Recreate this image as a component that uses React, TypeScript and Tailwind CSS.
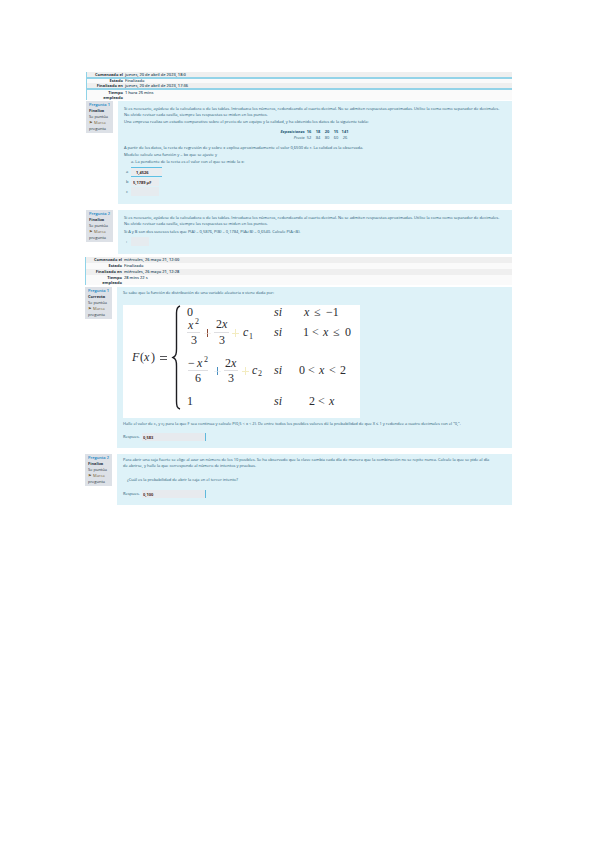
import type { ReactNode } from "react";

type SummaryRow = {
  label: ReactNode;
  value: string;
  className: string;
};

const elapsed = (
  <>
    Tiempo
    <br />
    empleado
  </>
);

const firstAttempt: SummaryRow[] = [
  { label: "Comenzado el", value: "jueves, 20 de abril de 2023, 18:0", className: "bg-[#efefef] leading-[5px] *:border-b-2" },
  { label: "Estado", value: "Finalizado", className: "bg-[#fafafa] leading-[4px]" },
  { label: "Finalizado en", value: "jueves, 20 de abril de 2023, 17:36", className: "bg-[#efefef] leading-[5px] *:border-b-2" },
  { label: elapsed, value: "1 hora 25 mins", className: "bg-[#fafafa] leading-[5px]" },
];

const secondAttempt: SummaryRow[] = [
  { label: "Comenzado el", value: "miércoles, 26 mayo 21, 12:00", className: "bg-[#efefef] leading-[6px]" },
  { label: "Estado", value: "Finalizado", className: "bg-[#fafafa] leading-[6px]" },
  { label: "Finalizado en", value: "miércoles, 26 mayo 21, 12:28", className: "bg-[#efefef] leading-[6px]" },
  { label: elapsed, value: "28 mins 22 s", className: "bg-[#fafafa] leading-[5px]" },
];

function Summary({ rows }: { rows: SummaryRow[] }) {
  return (
    <table className="w-full border-separate border-spacing-0 border-l border-[#8fd3e8] text-[4px] text-[#26323d]">
      <tbody>
        {rows.map((row, i) => (
          <tr key={i} className={row.className}>
            <th className="w-[36px] border-[#93d3e8] p-0 text-right align-top font-bold">{row.label}</th>
            <td className="border-[#93d3e8] py-0 pr-0 pl-[2px] align-top font-semibold text-[#2a4a60]">{row.value}</td>
          </tr>
        ))}
      </tbody>
    </table>
  );
}

function Question({ number, status, children }: { number: number; status: string; children: ReactNode }) {
  return (
    <section className="flex items-start gap-[5px]">
      <aside className="w-[27px] shrink-0 bg-[#dde1e7] px-[3px] pt-px pb-px text-[4px] leading-[6px] text-[#26323d]">
        <h2 className="font-semibold text-[#1583c4]">Pregunta {number}</h2>
        <p className="font-bold">{status}</p>
        <p>Se puntúa</p>
        <p className="text-[#7a643c]">⚑ Marca</p>
        <p className="font-medium">pregunta</p>
      </aside>
      <div className="min-w-0 grow bg-[#def2f8] px-[6px] text-[4px] leading-[6px] font-medium text-[#1f5875]">{children}</div>
    </section>
  );
}

function Answer({ id, value }: { id: string; value: string }) {
  return (
    <div className="flex h-[8px] items-center gap-[2px]">
      <label htmlFor={id} className="w-[17px]">
        Respues.
      </label>
      <input
        id={id}
        defaultValue={value}
        className="h-[8px] w-[64px] border-r border-[#5fb9dc] bg-[#e7eaee] px-[1px] font-bold text-[#4a2a24]"
      />
    </div>
  );
}

function Formula() {
  return (
    <svg
      viewBox="0 0 237 113"
      className="block h-[113px] w-[237px] bg-white font-['Liberation_Serif',serif] text-[12px] font-normal"
      fill="#2b2b30"
      role="img"
      aria-label="F(x)"
    >
      <text x="9" y="56" fontStyle="italic">F</text>
      <text x="17" y="56">(</text>
      <text x="21" y="56" fontStyle="italic">x</text>
      <text x="28" y="56">)</text>
      <path d="M37 51.500h7M37 54.500h7" stroke="#2b2b30" strokeWidth="0.800" />
      <path
        d="M57 1C54 2 53.500 4 53.500 8V44C53.500 49 53 51 50 52.500C53 54 53.500 56 53.500 61V96C53.500 101 54 103 57 104"
        fill="none"
        stroke="#1d1d22"
        strokeWidth="1.400"
      />
      <text x="64" y="11">0</text>
      <text x="151" y="11" fontStyle="italic">si</text>
      <text x="181" y="11" fontStyle="italic">x</text>
      <text x="191" y="11">≤</text>
      <text x="203" y="11">−1</text>

      <text x="65" y="24" fontStyle="italic">x</text>
      <text x="72" y="19" fontSize="8">2</text>
      <path d="M64 27.500h13M91 27.500h15M65 65.500h20M101 65.500h14" stroke="#c8c8cc" strokeWidth="0.600" />
      <text x="68" y="39">3</text>
      <path d="M84.500 24v8" stroke="#8c4a35" />
      <path d="M81 28.500h7" stroke="#efe4df" strokeWidth="0.600" />
      <text x="93" y="23">2</text>
      <text x="99" y="23" fontStyle="italic">x</text>
      <text x="96" y="39">3</text>
      <path d="M112.500 24v8M109 28.500h7" stroke="#f3ecc0" />
      <text x="120" y="31" fontStyle="italic">c</text>
      <text x="126" y="34" fontSize="8">1</text>
      <text x="151" y="31" fontStyle="italic">si</text>
      <text x="180" y="31">1</text>
      <text x="189" y="31">&lt;</text>
      <text x="200" y="31" fontStyle="italic">x</text>
      <text x="210" y="31">≤</text>
      <text x="222" y="31">0</text>

      <text x="65" y="62">−</text>
      <text x="74" y="62" fontStyle="italic">x</text>
      <text x="81" y="57" fontSize="8">2</text>
      <text x="72" y="77">6</text>
      <path d="M94.500 62v8" stroke="#4a8fc0" />
      <path d="M91 66.500h7" stroke="#dfeaf2" strokeWidth="0.600" />
      <text x="102" y="62">2</text>
      <text x="108" y="62" fontStyle="italic">x</text>
      <text x="105" y="77">3</text>
      <path d="M122.500 62v8M119 66.500h7" stroke="#f3ecc0" />
      <text x="129" y="69" fontStyle="italic">c</text>
      <text x="135" y="71" fontSize="8">2</text>
      <text x="151" y="69" fontStyle="italic">si</text>
      <text x="176" y="69">0</text>
      <text x="185" y="69">&lt;</text>
      <text x="196" y="69" fontStyle="italic">x</text>
      <text x="206" y="69">&lt;</text>
      <text x="217" y="69">2</text>

      <text x="64" y="100">1</text>
      <text x="151" y="100" fontStyle="italic">si</text>
      <text x="186" y="100">2</text>
      <text x="195" y="100">&lt;</text>
      <text x="206" y="100" fontStyle="italic">x</text>
    </svg>
  );
}

function Instructions() {
  return (
    <>
      <p>
        Si es necesario, ayúdese de la calculadora o de las tablas. Introduzca los números, redondeando al cuarto decimal. No se admiten respuestas aproximadas. Utilice la coma como separador de decimales.
      </p>
      <p>No olvide revisar cada casilla, siempre las respuestas se miden en los puntos.</p>
    </>
  );
}

export default function App() {
  return (
    <main className="min-h-screen bg-white pt-[72px] pr-[87px] font-['Open_Sans',sans-serif] whitespace-nowrap">
      <div className="flex flex-col pl-[86px]">
        <Summary rows={firstAttempt} />
        <div className="mt-px flex flex-col gap-[6px]">
          <Question number={1} status="Finaliza">
            <div className="flex h-[103px] flex-col pt-[5px]">
              <Instructions />
              <p className="mt-px">
                Una empresa realiza un estudio comparativo sobre el precio de un equipo y la calidad, y ha obtenido los datos de la siguiente tabla:
              </p>
              <table className="mt-[4px] self-center text-center">
                <tbody>
                  <tr>
                    <th className="p-0 text-right font-bold italic">Exposiciones</th>
                    {["16", "18", "20", "15", "141"].map((n) => (
                      <td key={n} className="w-[9px] p-0 font-bold">{n}</td>
                    ))}
                  </tr>
                  <tr>
                    <th className="p-0 text-right font-medium italic">Precio</th>
                    {["52", "84", "80", "60", "26"].map((n) => (
                      <td key={n} className="w-[9px] p-0">{n}</td>
                    ))}
                  </tr>
                </tbody>
              </table>
              <p className="mt-[4px]">
                A partir de los datos, la recta de regresión de y sobre x explica aproximadamente el valor 0,6500 de r. La calidad es la observada.
              </p>
              <p className="mt-px">Modelo: calcule una función y = bx que se ajuste y</p>
              <p className="mt-px pl-[7px]">a. La pendiente de la recta es el valor con el que se mide la x:</p>
              <div className="mt-[2px] flex items-center gap-[3px] pl-[2px]">
                <label htmlFor="q1a" className="w-[2px]">a</label>
                <input
                  id="q1a"
                  defaultValue="1,4526"
                  className="h-[10px] w-[31px] border-y border-[#5fbfe3] bg-[#e9ecef] px-[5px] font-bold text-[#3a2b2b]"
                />
              </div>
              <div className="mt-px flex items-center gap-[3px] pl-[2px]">
                <label htmlFor="q1b" className="w-[2px]">b</label>
                <input
                  id="q1b"
                  defaultValue="5,1789 µF"
                  className="h-[8px] w-[28px] bg-[#e9ecef] px-[2px] font-bold text-[#3a2b2b]"
                />
              </div>
              <div className="mt-px flex items-center gap-[3px] pl-[2px]">
                <label htmlFor="q1c" className="w-[2px]">c</label>
                <input id="q1c" className="h-[9px] w-[28px] bg-[#e6ebef]" />
              </div>
            </div>
          </Question>
          <Question number={2} status="Finaliza">
            <div className="flex h-[44px] flex-col pt-[5px]">
              <Instructions />
              <p className="mt-[2px]">
                Si A y B son dos sucesos tales que P(A) = 0,5876, P(B) = 0,1784, P(A∪B) = 0,6540. Calcule P(A∩B).
              </p>
              <div className="mt-[2px] flex items-center gap-[3px] pl-[2px]">
                <label htmlFor="q2" className="w-[2px]">:</label>
                <input id="q2" className="h-[9px] w-[18px] bg-[#e6ebef]" />
              </div>
            </div>
          </Question>
        </div>
      </div>

      <div className="mt-[3px] flex flex-col pl-[85px]">
        <Summary rows={secondAttempt} />
        <div className="mt-[2px] flex flex-col gap-[6px]">
          <Question number={1} status="Correcta">
            <div className="flex h-[161px] flex-col pt-[3px]">
              <p>Se sabe que la función de distribución de una variable aleatoria x viene dada por:</p>
              <div className="mt-[9px]">
                <Formula />
              </div>
              <p className="mt-[3px]">
                Halle el valor de c₁ y c₂ para la que F sea continua y calcule P(0,5 &lt; x &lt; 2). De entre todos los posibles valores dé la probabilidad de que X ≤ 1 y redondee a cuatro decimales con el "0,".
              </p>
              <div className="mt-[6px]">
                <Answer id="q3" value="0,583" />
              </div>
            </div>
          </Question>
          <Question number={2} status="Finaliza">
            <div className="flex h-[51px] flex-col pt-[3px]">
              <p>
                Para abrir una caja fuerte se elige al azar un número de los 10 posibles. Se ha observado que la clave cambia cada día de manera que la combinación no se repite nunca. Calcule la que se pide al día
              </p>
              <p>de abrirse, y halle la que corresponde al número de intentos y pruebas.</p>
              <p className="mt-[8px] pl-[4px]">¿Cuál es la probabilidad de abrir la caja en el tercer intento?</p>
              <div className="mt-[7px]">
                <Answer id="q4" value="0,100" />
              </div>
            </div>
          </Question>
        </div>
      </div>
    </main>
  );
}
